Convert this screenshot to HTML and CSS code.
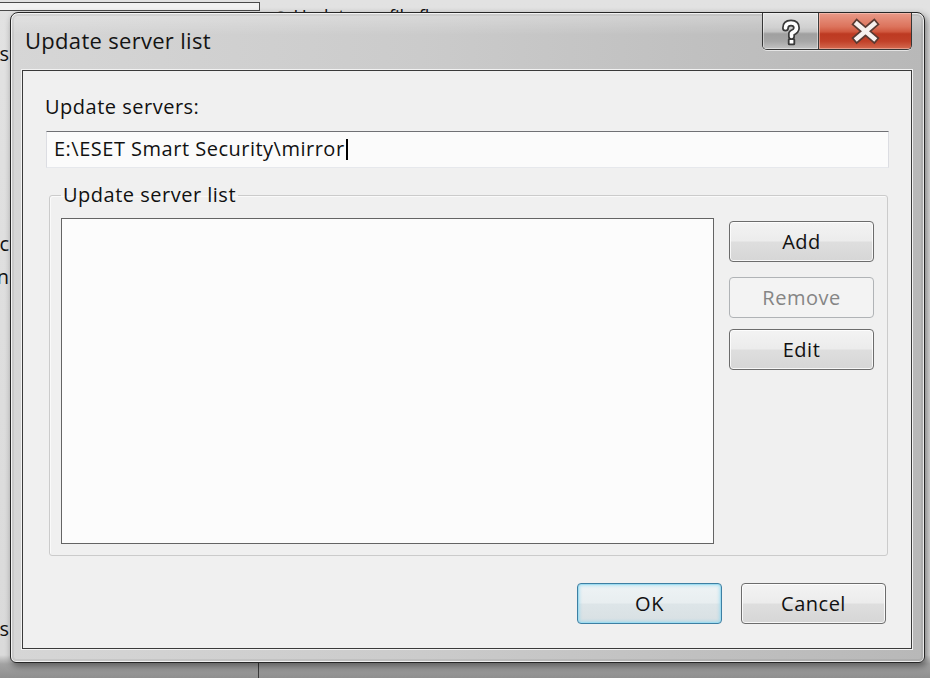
FILE: index.html
```html
<!DOCTYPE html>
<html lang="en">
<head>
<meta charset="utf-8">
<title>Update server list</title>
<link rel="stylesheet" href="styles.css">
</head>
<body>
<div class="desktop">
  <div class="bg-top">
    <div class="bg-box"></div>
    <span class="bg-text">● Update profile fl</span>
  </div>
  <div class="bg-left">
    <span class="bg-line l1">Options</span>
    <span class="bg-line l2">Basic</span>
    <span class="bg-line l3">Run</span>
    <span class="bg-line l4">Ports</span>
  </div>
  <div class="bg-divider"></div>

  <div class="dialog">
    <div class="titlebar">
      <span class="title">Update server list</span>
      <div class="caption-buttons">
        <button class="cap help" aria-label="Help">
          <svg width="55" height="36" viewBox="0 0 55 36">
            <path d="M22.5 15 Q22.5 10 28 10 Q33.5 10 33.5 15 Q33.5 18 29 20 L28.5 20.5 L28.5 23.5" fill="none" stroke="#3a3a3a" stroke-width="7" stroke-linecap="round" stroke-linejoin="round"/>
            <rect x="24.8" y="25.3" width="7.4" height="7" rx="1.5" fill="#3a3a3a"/>
            <path d="M22.5 15 Q22.5 10 28 10 Q33.5 10 33.5 15 Q33.5 18 29 20 L28.5 20.5 L28.5 23.5" fill="none" stroke="#ffffff" stroke-width="3.6" stroke-linecap="round" stroke-linejoin="round"/>
            <rect x="26.6" y="27" width="3.8" height="3.6" rx="0.6" fill="#ffffff"/>
          </svg>
        </button>
        <button class="cap close" aria-label="Close">
          <svg width="93" height="36" viewBox="0 0 93 36">
            <path d="M38 11 L55 25.5 M55 11 L38 25.5" fill="none" stroke="#5a3a32" stroke-width="8" stroke-linecap="square"/>
            <path d="M38 11 L55 25.5 M55 11 L38 25.5" fill="none" stroke="#f6f0ee" stroke-width="4.6" stroke-linecap="square"/>
          </svg>
        </button>
      </div>
    </div>

    <div class="client">
      <label class="lbl" for="servers">Update servers:</label>
      <div class="textbox" id="servers">E:\ESET Smart Security\mirror<span class="caret"></span></div>

      <fieldset class="group">
        <legend class="legend">Update server list</legend>
        <div class="group-body">
          <div class="listbox"></div>
          <div class="side-buttons">
            <button class="btn">Add</button>
            <button class="btn btn-remove" disabled>Remove</button>
            <button class="btn btn-edit">Edit</button>
          </div>
        </div>
      </fieldset>

      <div class="footer">
        <button class="btn btn-default">OK</button>
        <button class="btn">Cancel</button>
      </div>
    </div>
  </div>
</div>
</body>
</html>
```

FILE: styles.css
```css
* {
  box-sizing: border-box;
}

html,
body {
  margin: 0;
  padding: 0;
}

body {
  width: 930px;
  height: 678px;
  overflow: hidden;
  font-family: "Open Sans", "Noto Sans", "DejaVu Sans", sans-serif;
}

.desktop {
  position: relative;
  width: 930px;
  height: 678px;
  padding: 12px 0 0 10px;
  background: linear-gradient(to bottom, #e2e2e2 0, #dadada 655px, #a2a2a2 664px, #8f8f8f 678px);
}

/* background window fragments peeking out around the dialog */
.bg-top {
  position: absolute;
  left: 0;
  top: 0;
  width: 930px;
  height: 14px;
  z-index: 0;
}

.bg-box {
  position: absolute;
  left: -6px;
  top: 2px;
  width: 266px;
  height: 9px;
  border: 1px solid #4a4a4a;
  background: #f2f2f2;
}

.bg-text {
  position: absolute;
  left: 273px;
  top: 4px;
  font-size: 18px;
  line-height: 24px;
  color: #111;
  white-space: nowrap;
}

.bg-left {
  position: absolute;
  left: -100px;
  top: 0;
  width: 109px;
  text-align: right;
  z-index: 0;
  color: #111;
  font-size: 20px;
  line-height: 24px;
}

.bg-line {
  display: block;
}

.l1 { margin-top: 42px; }
.l2 { margin-top: 166px; }
.l3 { margin-top: 9px; }
.l4 { margin-top: 328px; }

.bg-divider {
  position: absolute;
  left: 258px;
  top: 660px;
  width: 1px;
  height: 18px;
  background: #3a3a3a;
  z-index: 0;
}

/* dialog window */
.dialog {
  position: relative;
  z-index: 1;
  width: 915px;
  height: 651px;
  border: 1px solid #262626;
  border-radius: 8px 8px 6px 6px;
  padding: 0 12px 13px 11px;
  display: flex;
  flex-direction: column;
  background:
    linear-gradient(to bottom, rgba(255, 255, 255, 0.3) 0, rgba(255, 255, 255, 0) 22px),
    linear-gradient(to right, #d6d6d6 0, #cbcbcb 45%, #c0c0c0 75%, #b8b8b8 100%);
  box-shadow:
    inset 0 0 0 1px rgba(255, 255, 255, 0.75),
    inset 0 0 0 3px rgba(0, 0, 0, 0.06),
    2px 3px 7px rgba(0, 0, 0, 0.45);
}

.titlebar {
  height: 57px;
  flex: none;
  display: flex;
  justify-content: space-between;
  align-items: flex-start;
}

.title {
  margin: 14px 0 0 3px;
  font-size: 22px;
  line-height: 26px;
  letter-spacing: 0.3px;
  color: #141414;
}

.caption-buttons {
  display: flex;
  width: 150px;
  height: 37px;
  border: 1px solid #363636;
  border-top: none;
  border-radius: 0 0 5px 5px;
  overflow: hidden;
  box-shadow: 0 1px 0 rgba(255, 255, 255, 0.6);
}

.cap {
  display: block;
  padding: 0;
  margin: 0;
  border: none;
  height: 36px;
}

.cap svg {
  display: block;
}

.help {
  width: 56px;
  border-right: 1px solid #3c3c3c;
  background: linear-gradient(to bottom, #e2e2e2 0, #d0d0d0 40%, #c2c2c2 52%, #a0a0a0 58%, #a6a6a6 78%, #c2c2c2 100%);
  box-shadow: inset 0 0 0 1px rgba(255, 255, 255, 0.45);
}

.close {
  flex: 1;
  background: linear-gradient(to bottom, #e99a88 0, #dc735c 38%, #d0583f 52%, #bd3a22 58%, #c14028 78%, #d46a50 100%);
  box-shadow: inset 0 0 0 1px rgba(255, 220, 210, 0.45);
}

/* client area */
.client {
  width: 890px;
  height: 579px;
  flex: none;
  border: 1px solid #3a3a3a;
  background: #f0f0f0;
  padding: 24px 22px 0 22px;
  box-shadow: 0 0 0 1px #f2f2f2;
  color: #111;
  font-size: 20px;
  line-height: 24px;
  letter-spacing: 0.5px;
}

.lbl {
  display: block;
  height: 24px;
}

.textbox {
  margin: 12px 0 0 1px;
  height: 37px;
  padding: 5px 7px;
  background: #fbfbfb;
  border: 1px solid #dcdde2;
  border-top-color: #6f7074;
  border-bottom-color: #e6e8ec;
  white-space: nowrap;
}

.caret {
  display: inline-block;
  width: 2px;
  height: 21px;
  margin-left: 1px;
  background: #000;
  vertical-align: -4px;
}

.group {
  margin: 15px 1px 0 4px;
  padding: 11px 13px 11px 11px;
  border: 1px solid #cbcbcb;
  border-radius: 3px;
  min-width: 0;
  box-shadow: inset 1px 1px 0 #fafafa;
}

.legend {
  padding: 0 2px;
  margin: 0;
  font-size: 20px;
  line-height: 24px;
}

.group-body {
  display: flex;
  align-items: flex-start;
}

.listbox {
  width: 653px;
  height: 326px;
  flex: none;
  background: #fcfcfc;
  border: 1px solid #646464;
}

.side-buttons {
  margin: 3px 0 0 15px;
  display: flex;
  flex-direction: column;
}

.btn {
  width: 145px;
  height: 41px;
  margin: 0;
  padding: 0;
  font-family: "Open Sans", "Noto Sans", "DejaVu Sans", sans-serif;
  font-size: 20px;
  line-height: 24px;
  letter-spacing: 0.5px;
  color: #111;
  border: 1px solid #6c6c6c;
  border-radius: 4px;
  background: linear-gradient(to bottom, #f3f3f3 0, #ececec 48%, #dedede 52%, #d6d6d6 100%);
  box-shadow: inset 0 0 0 1px rgba(255, 255, 255, 0.8);
}

.btn-remove {
  margin-top: 15px;
  color: #858585;
  border-color: #b0b3b6;
  background: #f3f3f3;
  box-shadow: none;
}

.btn-edit {
  margin-top: 11px;
}

.footer {
  margin: 27px 3px 0 0;
  display: flex;
  justify-content: flex-end;
  gap: 19px;
}

.btn-default {
  border-color: #3d7fa3;
  background: linear-gradient(to bottom, #eef3f5 0, #e8eef0 48%, #dde5e8 52%, #d8e0e3 100%);
  box-shadow: inset 0 0 0 1px #9fdcf0, inset 0 0 3px 2px rgba(120, 210, 240, 0.45);
}
```
